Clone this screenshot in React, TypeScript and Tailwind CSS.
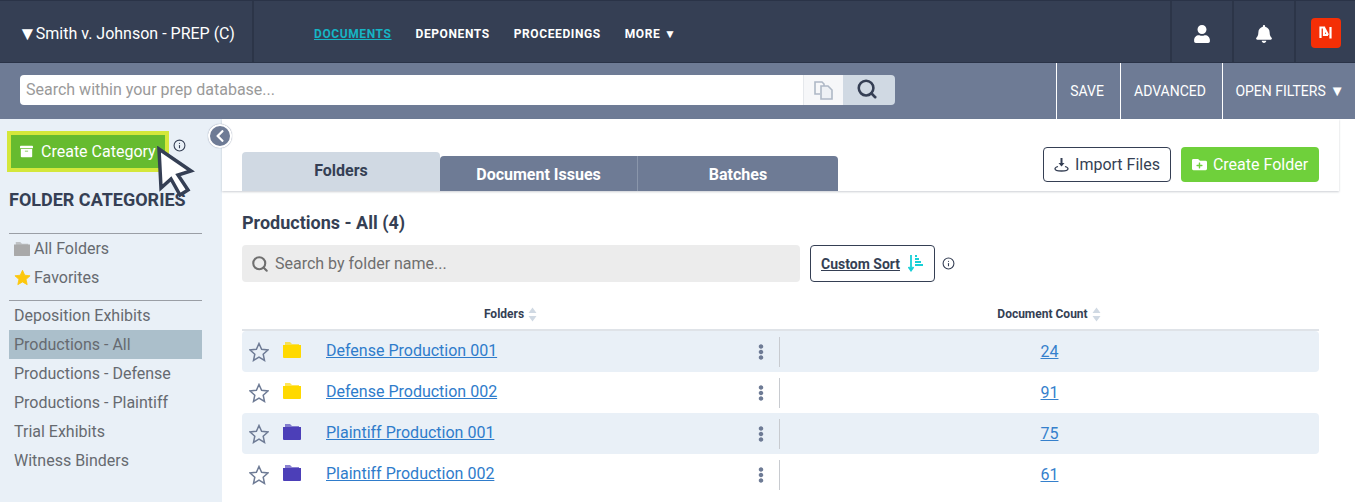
import { FaArchive, FaBell, FaEllipsisV, FaFolderPlus, FaUser, FaChevronLeft } from "react-icons/fa";
import { Info, Search } from "lucide-react";

const categories = ["Deposition Exhibits", "Productions - All", "Productions - Defense", "Productions - Plaintiff", "Trial Exhibits", "Witness Binders"];

const rows = [
  { name: "Defense Production 001", count: 24, color: "text-[#ffd900]" },
  { name: "Defense Production 002", count: 91, color: "text-[#ffd900]" },
  { name: "Plaintiff Production 001", count: 75, color: "text-[#4c3fb8]" },
  { name: "Plaintiff Production 002", count: 61, color: "text-[#4c3fb8]" },
];

const starPoints = "10,1.500 12.600,7.300 18.900,8 14.200,12.200 15.500,18.400 10,15.200 4.500,18.400 5.800,12.200 1.100,8 7.400,7.300";

const SortArrows = () => (
  <svg width="9" height="15" viewBox="0 0 9 15" className="ml-1 fill-[#d0d9e3]">
    <path d="M4.500 0.500 8.500 6H.5zM.5 9h8l-4 5.500z" />
  </svg>
);

const Cursor = () => (
  <svg width="40" height="52" viewBox="0 0 40 52" className="absolute left-[155px] top-[146px]">
    <path d="M4 3 6 42 16 33 25 49 33 44 23 29 36 25Z" fill="#fff" stroke="#353f54" strokeWidth="3.5" />
  </svg>
);

const FolderIcon = ({ color }: { color: string }) => (
  <svg width="18" height="16" viewBox="0 0 18 16" className={color}>
    <path d="M2 0h5l2 2h7v2H2z" fill="currentColor" opacity="0.65" />
    <path d="M0 3h18v12a1 1 0 0 1-1 1H1a1 1 0 0 1-1-1z" fill="currentColor" />
  </svg>
);

export default function App() {
  return (
    <div className="relative h-[502px] w-[1355px] overflow-hidden bg-white font-['Roboto',sans-serif]">
      <header className="flex h-[63px] border-y border-[#2a3347] bg-[#353f54] text-white">
        <div className="flex w-[254px] items-center border-r-2 border-[#2c3548] pl-[18px] pt-[4px] text-[16px]">
          <span className="-mr-[1px] text-[19px] leading-none">▼</span>Smith v. Johnson - PREP (C)
        </div>
        <nav className="flex flex-1 items-center gap-6 pl-[60px] pt-[4px] text-[12px] font-bold tracking-[0.6px]">
          <span className="text-[#16b5c4] underline">DOCUMENTS</span>
          <span>DEPONENTS</span>
          <span>PROCEEDINGS</span>
          <span>MORE ▼</span>
        </nav>
        <div className="flex w-[62px] items-center justify-center border-l-2 border-[#2c3548] pt-[4px]"><FaUser size={18} /></div>
        <div className="flex w-[62px] items-center justify-center border-l-2 border-[#2c3548] pt-[4px]"><FaBell size={18} /></div>
        <div className="flex w-[61px] items-center justify-center border-l-2 border-[#2c3548] pt-[2px]">
          <div className="flex h-[30px] w-[30px] items-center justify-center rounded-[4px] bg-[#f42f06]">
            <svg width="13" height="13" viewBox="0 0 13 13" fill="none" stroke="#fff" strokeWidth="2.2">
              <path d="M1.500 12V1.500h3.500v7.500h4M11.500 1v11.500M5 1.500l4 7.500" />
            </svg>
          </div>
        </div>
      </header>

      <div className="flex h-[56px] bg-[#6e7b95] text-white">
        <div className="flex flex-1 items-center pb-[2px] pl-5">
          <div className="flex h-[30px] w-[875px] overflow-hidden rounded-[4px]">
            <div className="flex flex-1 items-center bg-white pl-[6px] text-[16px] text-[#9a9a9a]">Search within your prep database...</div>
            <div className="flex w-[40px] items-center justify-center border-l border-[#e5e8ec] bg-[#f6f7f9]">
              <svg width="21" height="20" viewBox="0 0 21 20" fill="none" stroke="#aeb8c6" strokeWidth="1.600">
                <path d="M7 14H2V2h7l2 2v2" />
                <path d="M8 6h7l4 4v9H8z" fill="#eef1f5" />
              </svg>
            </div>
            <div className="flex w-[52px] items-center justify-center bg-[#d0d9e3] pb-[3px] pr-[4px] text-[#353f54]"><Search size={22} strokeWidth={2.800} /></div>
          </div>
        </div>
        <div className="flex w-[299px] text-[14px]">
          <div className="flex w-[64px] items-center justify-center border-l border-white pr-[3px]">SAVE</div>
          <div className="flex w-[102px] items-center justify-center border-l border-white pr-[3px]">ADVANCED</div>
          <div className="flex flex-1 items-center justify-center border-l border-white pl-[2px]">OPEN FILTERS<span className="ml-1 text-[15px] leading-none">▼</span></div>
        </div>
      </div>

      <div className="flex h-[383px]">
        <aside className="h-full w-[222px] bg-[#e9f0f7] px-[9px] pt-[12px]">
          <div className="-ml-[2px] flex items-center">
            <div className="flex h-[41px] w-[162px] items-center border-[4px] border-[#d4e73b] bg-[#66bb2f] pl-[9px] text-[16px] text-white">
              <FaArchive size={13} className="mr-[8px]" />Create Category
            </div>
            <Info size={13} className="ml-[4px] -mt-[13px] text-[#353f54]" />
          </div>
          <h2 className="mt-[15px] text-[18px] font-bold leading-[25px] text-[#353f54]">FOLDER CATEGORIES</h2>
          <div className="mt-[21px] w-[193px] border-t border-[#9a9ea5]">
            <div className="flex h-[29px] items-center pl-[5px] text-[16px] text-[#666a70]"><FolderIcon color="mr-[4px] w-[16px] text-[#a9a9a9]" />All Folders</div>
            <div className="flex h-[29px] items-center pl-[5px] text-[16px] text-[#666a70]">
              <svg width="17" height="17" viewBox="0 0 20 20" className="mr-[3px]"><polygon points={starPoints} fill="#fdc70c" stroke="#fdc70c" /></svg>
              Favorites
            </div>
          </div>
          <div className="mt-[8px] w-[193px] border-t border-[#9a9ea5]">
            {categories.map((c) => (
              <div key={c} className={`flex h-[29px] items-center pl-[5px] text-[16px] text-[#666a70] ${c === "Productions - All" ? "bg-[#abbfcb]" : ""}`}>{c}</div>
            ))}
          </div>
        </aside>

        <main className="w-[1117px] pl-[20px]">
          <div className="-ml-[20px] flex h-[72px] items-end justify-between pl-[20px] pr-[20px] shadow-[0_1px_2px_rgba(53,63,84,0.25)]">
            <div className="flex items-end text-[16px] font-bold">
              <div className="flex h-[39px] w-[198px] items-center justify-center rounded-t-[4px] bg-[#d0d9e3] pb-[2px] text-[#353f54]">Folders</div>
              <div className="flex h-[35px] w-[198px] items-center justify-center rounded-tl-[4px] border-r border-[#8a96ab] bg-[#6e7b95] pt-[2px] text-white">Document Issues</div>
              <div className="flex h-[35px] w-[200px] items-center justify-center rounded-tr-[4px] bg-[#6e7b95] pt-[2px] text-white">Batches</div>
            </div>
            <div className="mb-[9px] flex gap-[10px] text-[16px]">
              <div className="flex h-[35px] w-[128px] items-center justify-center rounded-[4px] border border-[#353f54] text-[#353f54]">
                <svg width="15" height="14" viewBox="0 0 15 14" className="mr-[6px]" fill="none" stroke="currentColor" strokeWidth="1.300">
                  <path d="M7.500 0v7" strokeWidth="2" />
                  <path d="M4.500 5h6L7.500 8.500z" fill="currentColor" stroke="none" />
                  <path d="M4 8.500C2.500 9 1 9.700 1 10.800 1 12.200 4 13 7.500 13s6.500-.8 6.500-2.200c0-1.100-1.500-1.800-3-2.300" />
                </svg>
                Import Files
              </div>
              <div className="flex h-[35px] w-[138px] items-center justify-center rounded-[4px] bg-[#6fd03b] text-white"><FaFolderPlus size={15} className="mr-[6px]" />Create Folder</div>
            </div>
          </div>

          <div className="pr-[20px]">
            <h1 className="mt-[19px] text-[18px] font-bold leading-[25px] text-[#353f54]">Productions - All (4)</h1>
            <div className="mt-[10px] flex items-center">
              <div className="flex h-[37px] w-[558px] items-center rounded-[4px] bg-[#ececec] pl-[9px] text-[16px] text-[#6f6f6f]"><Search size={18} strokeWidth={2.800} className="mr-[6px]" />Search by folder name...</div>
              <div className="ml-[10px] flex h-[37px] w-[125px] items-center justify-center rounded-[4px] border border-[#353f54] pt-[1px] text-[14px] font-bold text-[#353f54]">
                <span className="underline">Custom Sort</span>
                <svg width="16" height="18" viewBox="0 0 16 18" className="-mt-[2px] ml-2 text-[#17cfd6]" fill="none" stroke="currentColor" strokeWidth="1.800">
                  <path d="M3 1v15M.5 13 3 16.500 5.500 13M7 2h2M7 5h4M7 8h6M7 11h8" />
                </svg>
              </div>
              <Info size={13} className="ml-[7px] text-[#353f54]" />
            </div>

            <div className="mt-[23px] flex h-[26px] items-start border-b-2 border-[#dfe3e8] text-[12px] font-bold text-[#353f54]">
              <div className="flex w-[537px] items-center justify-center">Folders<SortArrows /></div>
              <div className="flex flex-1 items-center justify-center">Document Count<SortArrows /></div>
            </div>

            {rows.map((r, i) => (
              <div key={r.name} className={`flex h-[41px] items-center rounded-[4px] ${i % 2 === 0 ? "bg-[#e9f0f7]" : ""}`}>
                <div className="flex h-[30px] w-[538px] items-center border-r border-[#c8cbd0] pl-[7px]">
                  <svg width="20" height="20" viewBox="0 0 20 20" fill="none" stroke="#6e7b95" strokeWidth="1.500"><polygon points={starPoints} /></svg>
                  <FolderIcon color={`-mt-[3px] ml-[14px] ${r.color}`} />
                  <span className="mb-[2px] ml-[25px] flex-1 text-[16px] text-[#2f7ccb] underline">{r.name}</span>
                  <FaEllipsisV size={16} className="mr-[10px] text-[#6e7b95]" />
                </div>
                <div className="flex-1 text-center text-[16px] text-[#3580cc] underline">{r.count}</div>
              </div>
            ))}
          </div>
        </main>
      </div>

      <div className="absolute left-[208px] top-[124px] flex h-[24px] w-[24px] items-center justify-center rounded-full border-2 border-white bg-[#6e7b95] text-white shadow-[0_0_1px_#6e7b95]"><FaChevronLeft size={14} /></div>
      <Cursor />
    </div>
  );
}
